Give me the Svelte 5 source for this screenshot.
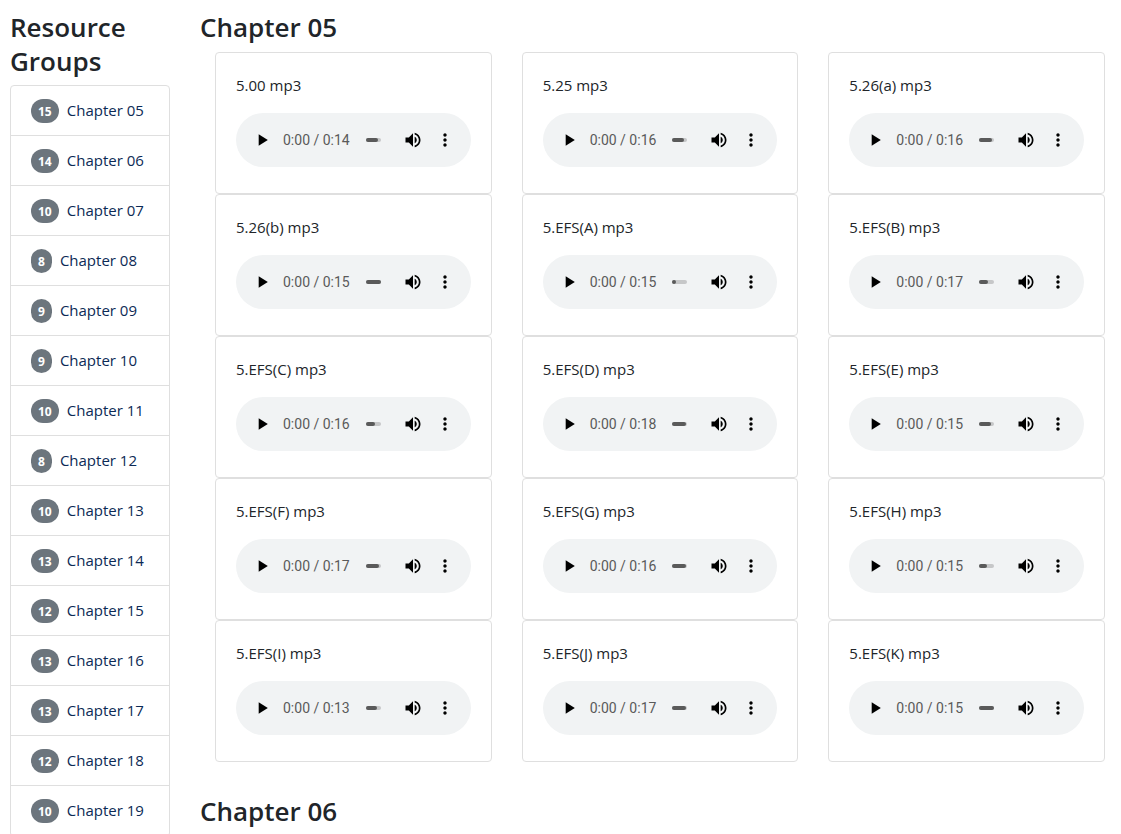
<script lang="ts">
    type Track = { name: string; length: string; loaded: number };

    const groups = [
        { name: "Chapter 05", count: 15 },
        { name: "Chapter 06", count: 14 },
        { name: "Chapter 07", count: 10 },
        { name: "Chapter 08", count: 8 },
        { name: "Chapter 09", count: 9 },
        { name: "Chapter 10", count: 9 },
        { name: "Chapter 11", count: 10 },
        { name: "Chapter 12", count: 8 },
        { name: "Chapter 13", count: 10 },
        { name: "Chapter 14", count: 13 },
        { name: "Chapter 15", count: 12 },
        { name: "Chapter 16", count: 13 },
        { name: "Chapter 17", count: 13 },
        { name: "Chapter 18", count: 12 },
        { name: "Chapter 19", count: 10 },
    ];

    // loaded is the buffered share of the file, in percent
    const tracks: Track[] = [
        { name: "5.00", length: "0:14", loaded: 80 },
        { name: "5.25", length: "0:16", loaded: 80 },
        { name: "5.26(a)", length: "0:16", loaded: 90 },
        { name: "5.26(b)", length: "0:15", loaded: 100 },
        { name: "5.EFS(A)", length: "0:15", loaded: 25 },
        { name: "5.EFS(B)", length: "0:17", loaded: 60 },
        { name: "5.EFS(C)", length: "0:16", loaded: 60 },
        { name: "5.EFS(D)", length: "0:18", loaded: 90 },
        { name: "5.EFS(E)", length: "0:15", loaded: 80 },
        { name: "5.EFS(F)", length: "0:17", loaded: 90 },
        { name: "5.EFS(G)", length: "0:16", loaded: 90 },
        { name: "5.EFS(H)", length: "0:15", loaded: 50 },
        { name: "5.EFS(I)", length: "0:13", loaded: 75 },
        { name: "5.EFS(J)", length: "0:17", loaded: 90 },
        { name: "5.EFS(K)", length: "0:15", loaded: 100 },
    ];

    function slug(name: string) {
        return name.toLowerCase().replace(" ", "-");
    }
</script>

<div class="page">
    <nav>
        <h3>Resource Groups</h3>
        <ul>
            {#each groups as group}
                <li>
                    <span class="badge">{group.count}</span>
                    <a href="#{slug(group.name)}">{group.name}</a>
                </li>
            {/each}
        </ul>
    </nav>

    <main>
        <section id="chapter-05">
            <h3>Chapter 05</h3>
            <div class="cards">
                {#each tracks as track}
                    <article class="card">
                        <p>{track.name} mp3</p>
                        <div class="player">
                            <button aria-label="Play {track.name}">
                                <svg viewBox="0 0 24 24"><path d="M8 5v14l11-7z" /></svg>
                            </button>
                            <span class="time">0:00 / {track.length}</span>
                            <div class="timeline">
                                <div class="loaded" style="width: {track.loaded}%"></div>
                            </div>
                            <button aria-label="Mute {track.name}">
                                <svg viewBox="0 0 24 24">
                                    <path d="M3 9v6h4l5 5V4L7 9H3zm13.5 3c0-1.77-1.02-3.29-2.5-4.03v8.05c1.48-.73 2.5-2.25 2.5-4.02zM14 3.23v2.06c2.89.86 5 3.54 5 6.71s-2.11 5.85-5 6.71v2.06c4.01-.91 7-4.49 7-8.77s-2.99-7.86-7-8.77z" />
                                </svg>
                            </button>
                            <button aria-label="More options for {track.name}">
                                <svg viewBox="0 0 24 24">
                                    <path d="M12 8c1.1 0 2-.9 2-2s-.9-2-2-2-2 .9-2 2 .9 2 2 2zm0 2c-1.1 0-2 .9-2 2s.9 2 2 2 2-.9 2-2-.9-2-2-2zm0 6c-1.1 0-2 .9-2 2s.9 2 2 2 2-.9 2-2-.9-2-2-2z" />
                                </svg>
                            </button>
                        </div>
                    </article>
                {/each}
            </div>
        </section>

        <section id="chapter-06">
            <h3>Chapter 06</h3>
        </section>
    </main>
</div>

<style>
    :global(body) {
        background: #fff;
        color: #212529;
        font-family: "Segoe UI", "Open Sans", "Noto Sans", sans-serif;
        font-size: 15px;
        line-height: 24px;
    }

    * {
        box-sizing: border-box;
    }

    .page {
        display: grid;
        grid-template-columns: 160px minmax(0, 1fr);
        column-gap: 30px;
        padding: 10px 16px 0 10px;
    }

    h3 {
        margin: 0 0 8px;
        font-size: 26px;
        font-weight: 600;
        line-height: 34px;
    }

    nav h3 {
        margin-bottom: 7px;
    }

    ul {
        margin: 0;
        padding: 0;
        list-style: none;
        border: 1px solid #dfdfdf;
        border-radius: 4px;
    }

    li {
        display: flex;
        align-items: flex-start;
        gap: 8px;
        height: 50px;
        padding: 13px 20px 0;
        border-bottom: 1px solid #dfdfdf;
    }

    li:last-child {
        border-bottom: 0;
    }

    a {
        color: #0c2a55;
        line-height: 22px;
        text-decoration: none;
    }

    .badge {
        padding: 2px 7px 0;
        border-radius: 12px;
        background: #6c757d;
        color: #fff;
        font-size: 12px;
        font-weight: 700;
        line-height: 22px;
    }

    section {
        margin-bottom: 32px;
    }

    .cards {
        display: grid;
        grid-template-columns: repeat(3, minmax(0, 1fr));
        column-gap: 30px;
        padding-left: 15px;
    }

    .card {
        height: 142px;
        padding: 20px;
        border: 1px solid #dfdfdf;
        border-radius: 4px;
    }

    p {
        margin: 0 0 16px;
    }

    .player {
        display: flex;
        align-items: center;
        height: 54px;
        padding: 0 10px;
        border-radius: 27px;
        background: #f1f3f4;
    }

    button {
        display: flex;
        flex: none;
        align-items: center;
        justify-content: center;
        width: 32px;
        height: 32px;
        padding: 0;
        border: 0;
        background: none;
        cursor: pointer;
    }

    svg {
        width: 20px;
        height: 20px;
    }

    .time {
        margin-left: 5px;
        color: #5a5a5a;
        font-family: Roboto, sans-serif;
        font-size: 14px;
        white-space: nowrap;
    }

    .timeline {
        flex: 1;
        height: 4px;
        margin: 0 16px;
        border-radius: 2px;
        background: #c6c7c8;
    }

    .loaded {
        height: 4px;
        border-radius: 2px;
        background: #5a5a5a;
    }
</style>
